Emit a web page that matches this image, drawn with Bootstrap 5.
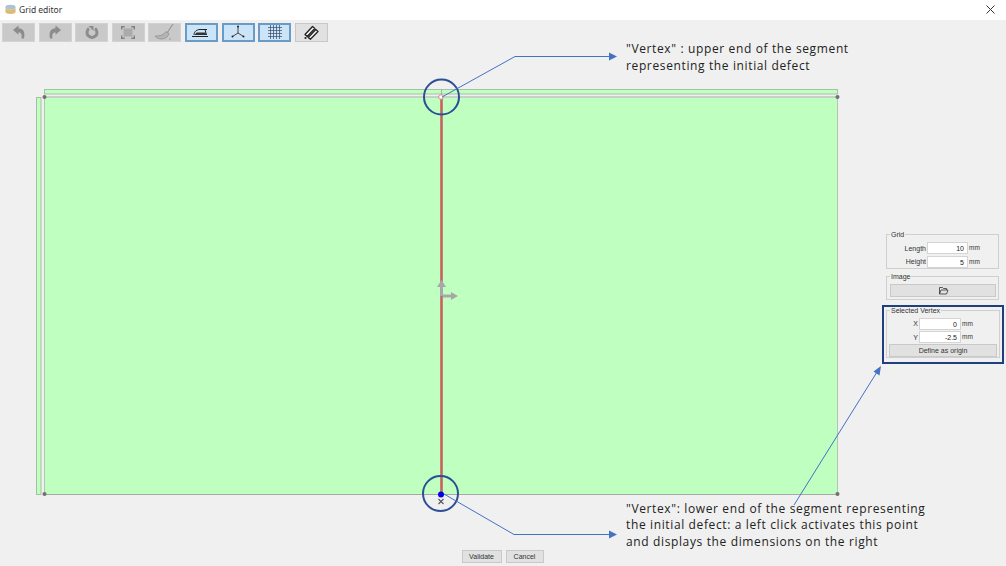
<!DOCTYPE html>
<html lang="en"><head><meta charset="utf-8"><title>Grid editor</title>
<link rel="stylesheet" href="https://cdn.jsdelivr.net/npm/bootstrap@5.3.0/dist/css/bootstrap.min.css">
<style>
html,body{height:566px;overflow:hidden;background:#f0f0f0}
body{font-family:"Liberation Sans",Arial,sans-serif;font-size:7px;color:#333;line-height:1}
.appwin{width:1006px;height:566px}
.titlebar{height:20px;background:#fff;padding:0 11px 0 5px}
.titlebar .ttl{font-size:8.5px;color:#333;font-family:"Noto Sans",sans-serif;margin-left:3px}
.toolbar{height:25px;padding:3px 0 0 2px;gap:3.6px}
.tbtn{width:33px;height:19px;background:#c9c9c9;border:1px solid #d2d2d2;padding:0}
.tbtn.on{background:#cce4f7;border:2px solid #6a9bc6}
.tbtn.plain{background:#e1e1e1;border:1px solid #c8c8c8}
.stage{height:505px}
.plan{position:absolute;left:0;top:0;width:1006px;height:566px;margin-top:-45px}
.note{position:absolute;left:626px;font-family:"Open Sans",sans-serif;font-size:12px;line-height:16.5px;color:#222;letter-spacing:.63px;white-space:nowrap}
.note.n1{top:-4.500px;line-height:17px}
.note.n2{top:456px}
.sidecol{position:absolute;left:882px;top:189px;width:122px}
.gbox{position:relative;border:1px solid #cfcfcf;margin-left:4px;width:113px}
.gbox .lgd{position:absolute;left:3px;top:-4px;background:#f0f0f0;padding:0 1px;font-size:7px;color:#333}
.b-grid{height:35px;padding-top:7px;margin-bottom:7px}
.b-img{height:24px;padding:7px 3px 0;margin-bottom:5px}
.b-sel{height:48px;padding-top:6.500px}
.hilite{border:2px solid #1f3f7f;height:59px;padding:3px 0 0;width:122px}
.hilite .gbox{margin-left:2px;margin-right:2px;width:114px}
.frow{height:13.500px;gap:1px}
.frow label{font-size:7px;text-align:right}
.frow .fld{background:#fff;border:1px solid #d4d4d4;height:12px;font-size:7px;text-align:right;padding:1px 3px 0 0;line-height:9px;color:#222}
.frow .unit{font-size:6.500px}
.b-grid label{width:39px}.b-grid .fld{width:41px}
.b-sel label{width:31px}.b-sel .fld{width:42px}
.flatbtn{background:#e1e1e1;border:1px solid #c9c9c9;border-radius:0;color:#333;font-size:7px;line-height:9px;padding:0}
.b-img .flatbtn{width:106px;height:13px}
.b-sel .flatbtn{width:108px;height:13px;margin:0 0 0 2px}
.foot{gap:4px;padding-top:5px;height:21px;padding-right:1px}
.foot .flatbtn{height:13px;font-family:"Liberation Sans",sans-serif}
.w40{width:40px}.w38{width:38px}
</style></head><body>
<div class="appwin d-flex flex-column">
 <div class="titlebar d-flex align-items-center">
  <svg width="11" height="11" viewBox="0 0 11 11"><path d="M0.500 3v5.500c1 2 9 2 10 0V3z" fill="#e8c88a"/><path d="M.5 5.500c1 2 9 2 10 0M.5 7c1 2 9 2 10 0" stroke="#c9a05c" stroke-width=".6" fill="none"/><ellipse cx="5.500" cy="3" rx="5" ry="2.300" fill="#a9c4d6"/></svg>
  <span class="ttl">Grid editor</span>
  <svg class="ms-auto" width="9" height="9" viewBox="0 0 9 9"><path d="M.5.500l8 8M8.500.500l-8 8" stroke="#333" stroke-width="1"/></svg>
 </div>
 <div class="toolbar d-flex">
  <button class="tbtn d-flex align-items-center justify-content-center"><svg width="14" height="14" viewBox="0 0 14 14"><path d="M1 5 6.500 .5v2.800c4.500 0 7 3.500 5.500 10.200H9.500C10 10 9.500 7.500 6.500 7.300V9.800z" fill="#8c8c8c"/></svg></button>
  <button class="tbtn d-flex align-items-center justify-content-center"><svg width="14" height="14" viewBox="0 0 14 14"><path d="M13 5 7.500 .5v2.800C3 3.300 .5 6.800 2 13.500h2.500C4 10 4.500 7.500 7.500 7.300V9.800z" fill="#8c8c8c"/></svg></button>
  <button class="tbtn d-flex align-items-center justify-content-center"><svg width="14" height="15" viewBox="0 0 14 15"><path d="M4 3.500A5 5 0 1 0 10 3.500" fill="none" stroke="#8c8c8c" stroke-width="3"/><path d="M3.500 1 8.500 1 8.500 6z" fill="#8c8c8c"/></svg></button>
  <button class="tbtn d-flex align-items-center justify-content-center"><svg width="14" height="13" viewBox="0 0 14 13"><rect x="2.500" y="2.500" width="9" height="8" fill="#aaa"/><path d="M.7 3.500V.7h3M10.300 .7h3v2.800M13.300 9.500v2.800h-3M3.700 12.300h-3V9.500" fill="none" stroke="#808080" stroke-width="1.400"/></svg></button>
  <button class="tbtn d-flex align-items-center justify-content-center"><svg width="14" height="17" viewBox="0 0 14 17" style="overflow:visible"><path d="M15 0 9 9" stroke="#8c8c8c" stroke-width="1"/><path d="M-3 12c3 0 8 0 11-4.500l3 2c-1 3-3 5.500-7 5.500-3.500 0-6-1-7-3z" fill="#b4b4b4" stroke="#8c8c8c" stroke-width=".7"/><circle cx="12" cy="15" r=".7" fill="#8c8c8c"/></svg></button>
  <button class="tbtn on d-flex align-items-center justify-content-center"><svg width="18" height="11" viewBox="0 0 18 11"><path d="M2 8C2 4.500 5 2.500 8 2.500H15M13 2.500 14.500 8" fill="none" stroke="#222" stroke-width="1"/><path d="M4.500 5.500H13.500L14.500 8H2.500z" fill="#333"/><path d="M0 9.500H16" stroke="#222" stroke-width="1"/></svg></button>
  <button class="tbtn on d-flex align-items-center justify-content-center"><svg width="16" height="14" viewBox="0 0 16 14"><path d="M8 1.500V8L2.500 11.500M8 8l5.500 3.500" fill="none" stroke="#333" stroke-width=".9"/><circle cx="8" cy="1.500" r="1" fill="#222"/><circle cx="2.500" cy="11.500" r="1" fill="#222"/><circle cx="13.500" cy="11.500" r="1" fill="#222"/></svg></button>
  <button class="tbtn on d-flex align-items-center justify-content-center"><svg width="14" height="14" viewBox="0 0 14 14"><path d="M2.500 0v14M5.500 0v14M8.500 0v14M11.500 0v14M0 2.500h14M0 5.500h14M0 8.500h14M0 11.500h14" stroke="#46587a" stroke-width=".8"/></svg></button>
  <button class="tbtn plain d-flex align-items-center justify-content-center"><svg width="16" height="15" viewBox="0 0 16 15"><g fill="#f4f4f4" stroke="#222" stroke-width="1.300" stroke-linejoin="round"><path d="M2 9.500 9.500 1.500 11.800 3.500 4.200 11.500z"/><path d="M5.200 12.500 12.800 4.500 15 6.500 7.400 14.200z"/></g><circle cx="2.500" cy="13" r="1.100" fill="#222"/></svg></button>
 </div>
 <div class="stage position-relative">
  <svg class="plan" viewBox="0 0 1006 566">
   <rect x="44.500" y="89.500" width="793" height="4.500" fill="#bfffbf" stroke="#a6bfa6"/>
   <rect x="36.500" y="97.500" width="4.500" height="397" fill="#bfffbf" stroke="#a6bfa6"/>
   <rect x="44.500" y="97.500" width="793" height="397" fill="#bfffbf"/>
   <path d="M44 97H838" stroke="#bcc4bc" stroke-width="1.500"/>
   <path d="M44 494.500H838" stroke="#a8a8a8"/><path d="M44.500 97V494M837.500 97V494" stroke="#b0c8b0"/>
   <circle cx="44.500" cy="97" r="2" fill="#707070"/><circle cx="837.500" cy="97" r="2" fill="#707070"/><circle cx="44.500" cy="494" r="2" fill="#707070"/><circle cx="837.500" cy="494" r="2" fill="#707070"/>
   <path d="M441.500 89V97" stroke="#a0b8a0"/>
   <path d="M441.500 97V494" stroke="#c8625f" stroke-width="2.600"/>
   <path d="M441.500 296V286" stroke="#a8a8a8" stroke-width="3"/><path d="M437 287 441.500 280 446 287z" fill="#a8a8a8"/>
   <path d="M443 296H452" stroke="#a8a8a8" stroke-width="3"/><path d="M451 292 458 296 451 300z" fill="#a8a8a8"/>
   <circle cx="441" cy="97" r="2.300" fill="#fff" stroke="#d98a8a"/>
   <circle cx="441" cy="494.500" r="3" fill="#0000e6"/>
   <path d="M438.500 499 443.500 504M443.500 499 438.500 504" stroke="#555" stroke-width="1.100"/>
   <circle cx="441.500" cy="97" r="17.500" fill="none" stroke="#2c4f95" stroke-width="2"/>
   <circle cx="440.500" cy="493.500" r="17.500" fill="none" stroke="#2c4f95" stroke-width="2"/>
   <path d="M442 97 515 56.500H611M444 494 514 534.500H611" fill="none" stroke="#4472c4" stroke-width="1"/>
   <path d="M609 52.500 617 56.500 609 60.500zM609 530.500 617 534.500 609 538.500z" fill="#4472c4"/>
   <path d="M794 505 877 372" stroke="#4472c4" stroke-width="1"/><path d="M881 366 879.500 375.500 873.500 371.500z" fill="#4472c4"/>
  </svg>
  <div class="note n1">"Vertex" : upper end of the segment<br>representing the initial defect</div>
  <div class="note n2">"Vertex": lower end of the segment representing<br>the initial defect: a left click activates this point<br>and displays the dimensions on the right</div>
  <div class="sidecol">
   <div class="gbox b-grid"><span class="lgd">Grid</span>
    <div class="frow d-flex align-items-center"><label>Length</label><div class="fld">10</div><span class="unit">mm</span></div>
    <div class="frow d-flex align-items-center"><label>Height</label><div class="fld">5</div><span class="unit">mm</span></div>
   </div>
   <div class="gbox b-img"><span class="lgd">Image</span>
    <button class="flatbtn d-flex align-items-center justify-content-center"><svg width="11" height="9" viewBox="0 0 11 9"><path d="M1.500 8V1.500h3l1 1h3v1.500M1.500 8h7l1.500-4H3z" fill="none" stroke="#333" stroke-width=".8"/></svg></button>
   </div>
   <div class="hilite">
    <div class="gbox b-sel"><span class="lgd">Selected Vertex</span>
     <div class="frow d-flex align-items-center"><label>X</label><div class="fld">0</div><span class="unit">mm</span></div>
     <div class="frow d-flex align-items-center"><label>Y</label><div class="fld">-2.5</div><span class="unit">mm</span></div>
     <button class="flatbtn d-block">Define as origin</button>
    </div>
   </div>
  </div>
 </div>
 <div class="foot d-flex justify-content-center">
  <button class="flatbtn w40">Validate</button><button class="flatbtn w38">Cancel</button>
 </div>
</div>
</body></html>
